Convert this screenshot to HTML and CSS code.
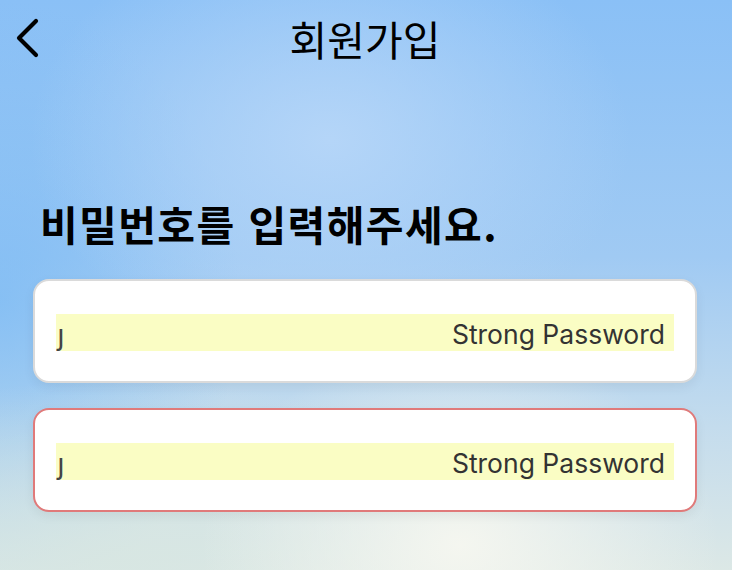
FILE: index.html
```html
<!DOCTYPE html>
<html lang="ko">
<head>
  <meta charset="UTF-8" />
  <meta name="viewport" content="width=device-width, initial-scale=1" />
  <title>회원가입</title>
  <link rel="stylesheet" href="styles.css">
</head>
<body>

  <!-- Top bar -->
  <div class="top-bar">
    <button class="back-btn" aria-label="뒤로">
      <svg width="28" height="42" viewBox="0 0 28 42">
        <polyline points="22,4 5,21 22,38" fill="none" stroke="#000" stroke-width="4.2" stroke-linecap="round" stroke-linejoin="round" />
      </svg>
    </button>
    <h1 class="page-title">회원가입</h1>
  </div>

  <div class="content">
    <h2 class="prompt">비밀번호를 입력해주세요.</h2>

    <div class="field">
      <div class="autofill">
        <span class="caret">ȷ</span>
        <span class="hint">Strong Password</span>
      </div>
    </div>

    <div class="field field-error">
      <div class="autofill">
        <span class="caret">ȷ</span>
        <span class="hint">Strong Password</span>
      </div>
    </div>
  </div>

</body>
</html>
```

FILE: styles.css
```css
* {
  box-sizing: border-box;
}

html,
body {
  height: 100%;
}

body {
  margin: 0;
  font-family: "Noto Sans CJK KR", "Noto Sans", sans-serif;
  color: #000;
  overflow: hidden;
  background:
    radial-gradient(ellipse 260px 200px at 460px 545px, rgba(246, 247, 240, 0.95), rgba(246, 247, 240, 0) 100%),
    radial-gradient(ellipse 420px 180px at 120px 560px, rgba(215, 230, 226, 0.9), rgba(215, 230, 226, 0) 100%),
    radial-gradient(ellipse 300px 220px at 330px 140px, rgba(182, 214, 248, 0.95), rgba(182, 214, 248, 0) 100%),
    radial-gradient(ellipse 240px 300px at 0px 300px, rgba(120, 185, 245, 0.7), rgba(120, 185, 245, 0) 100%),
    linear-gradient(180deg, #8ac0f6 0%, #a0caf3 45%, #c4dced 75%, #dce8e6 100%);
}

.top-bar {
  position: relative;
  height: 76px;
  display: flex;
  align-items: center;
  justify-content: center;
}

.back-btn {
  position: absolute;
  left: 14px;
  top: 17px;
  padding: 0;
  border: none;
  background: none;
  cursor: pointer;
}

.page-title {
  margin: 0;
  font-size: 41px;
  font-weight: 400;
  line-height: 1;
  padding-right: 2px;
}

.content {
  padding: 118px 35px 0 33px;
}

.prompt {
  margin: 0 0 27px 7px;
  font-size: 41px;
  font-weight: 700;
  letter-spacing: 1.4px;
  line-height: 58px;
}

.field {
  height: 104px;
  margin-bottom: 25px;
  padding: 33px 21px 0;
  background: #fff;
  border: 2px solid #dadada;
  border-radius: 16px;
  box-shadow: 0 4px 12px rgba(0, 0, 0, 0.06);
}

.field-error {
  border-color: #e07a7a;
}

.autofill {
  height: 37px;
  display: flex;
  align-items: flex-end;
  justify-content: space-between;
  padding-right: 9px;
  background: #fafdc4;
}

.caret {
  font-family: "DejaVu Sans", sans-serif;
  font-size: 28px;
  line-height: 30px;
  color: #444;
  margin-left: 1px;
}

.hint {
  font-family: Inter, "Noto Sans", sans-serif;
  font-size: 26.5px;
  line-height: 34px;
  color: #333;
}
```
